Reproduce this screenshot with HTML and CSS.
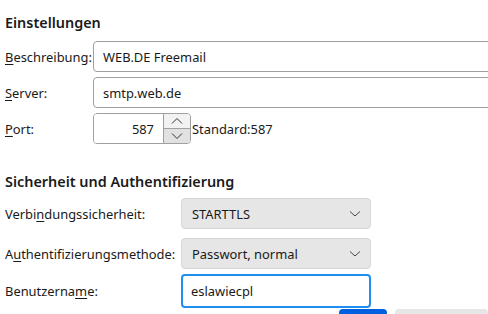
FILE: index.html
```html
<!DOCTYPE html>
<html lang="de">
<head>
    <meta charset="UTF-8">
    <title>Postausgangs-Server</title>
    <link rel="stylesheet" href="styles.css">
</head>
<body>
    <h2 class="section-title">Einstellungen</h2>
    <div class="server-grid">
        <label for="description"><u>B</u>eschreibung:</label>
        <input type="text" id="description" class="text-field" value="WEB.DE Freemail">

        <label for="hostname"><u>S</u>erver:</label>
        <input type="text" id="hostname" class="text-field" value="smtp.web.de">

        <label for="port"><u>P</u>ort:</label>
        <div class="port-row">
            <div class="port-box">
                <input type="text" id="port" class="port-input" value="587">
                <div class="spinner">
                    <span class="spin-up">
                        <svg width="12" height="8" viewBox="0 0 12 8"><path d="M1 6.5 L6 1.5 L11 6.5" fill="none" stroke="#333" stroke-width="1"/></svg>
                    </span>
                    <span class="spin-down">
                        <svg width="12" height="8" viewBox="0 0 12 8"><path d="M1 1.5 L6 6.5 L11 1.5" fill="none" stroke="#333" stroke-width="1"/></svg>
                    </span>
                </div>
            </div>
            <span class="port-default">Standard:587</span>
        </div>
    </div>

    <h2 class="section-title second">Sicherheit und Authentifizierung</h2>
    <div class="auth-grid">
        <label for="security">Verbi<u>n</u>dungssicherheit:</label>
        <div class="dropdown" id="security">
            <span>STARTTLS</span>
            <svg width="12" height="8" viewBox="0 0 12 8"><path d="M1 1.5 L6 6 L11 1.5" fill="none" stroke="#444" stroke-width="1"/></svg>
        </div>

        <label for="auth-method">A<u>u</u>thentifizierungsmethode:</label>
        <div class="dropdown" id="auth-method">
            <span>Passwort, normal</span>
            <svg width="12" height="8" viewBox="0 0 12 8"><path d="M1 1.5 L6 6 L11 1.5" fill="none" stroke="#444" stroke-width="1"/></svg>
        </div>

        <label for="username" class="tight">Benutzerna<u>m</u>e:</label>
        <input type="text" id="username" class="text-field focused tight" value="eslawiecpl">
    </div>

    <div class="dialog-buttons">
        <span class="btn-primary"></span>
        <span class="btn-secondary"></span>
    </div>
</body>
</html>
```

FILE: styles.css
```css
/* Page */
body {
    margin: 0;
    padding: 0 0 0 5px;
    font-family: "Noto Sans", "Open Sans", sans-serif;
    font-size: 12.9px;
    color: #1a1a1a;
    background-color: white;
    overflow: hidden;
    height: 314px;
}

u {
    text-decoration-thickness: 1px;
    text-underline-offset: 2px;
}

.section-title {
    font-size: 14.4px;
    font-weight: 600;
    margin: 12px 0 8px 0;
    height: 21px;
    line-height: 21px;
}

.section-title.second {
    margin-top: 27px;
    margin-bottom: 6px;
}

/* First block */
.server-grid {
    display: grid;
    grid-template-columns: 88px 1fr;
    grid-auto-rows: 31px;
    row-gap: 5px;
    align-items: center;
}

.text-field {
    box-sizing: border-box;
    height: 31px;
    width: 100%;
    padding: 0 9px;
    font-family: inherit;
    font-size: 12.9px;
    color: #1a1a1a;
    border: 1px solid #a0a0a0;
    border-radius: 4px;
    background-color: white;
}

.server-grid .text-field {
    width: calc(100% + 20px);
}

.port-row {
    display: flex;
    align-items: center;
}

.port-box {
    display: flex;
    height: 31px;
    width: 98px;
    box-sizing: border-box;
    border: 1px solid #a0a0a0;
    border-radius: 4px;
    overflow: hidden;
}

.port-input {
    flex: 1;
    min-width: 0;
    width: auto;
    border: none;
    padding: 0 9px 0 0;
    text-align: right;
    font-family: inherit;
    font-size: 12.9px;
    color: #1a1a1a;
}

.spinner {
    flex: none;
    display: flex;
    flex-direction: column;
    width: 26px;
    border-left: 1px solid #a0a0a0;
}

.spinner span {
    flex: 1;
    display: flex;
    align-items: center;
    justify-content: center;
}

.spin-up {
    background-color: #f2f2f2;
    border-bottom: 1px solid #a0a0a0;
}

.spin-down {
    background-color: #e1e1e1;
}

.port-default {
    margin-left: 1px;
}

/* Second block */
.auth-grid {
    display: grid;
    grid-template-columns: 176px 190px;
    grid-template-rows: 31px 31px 34px;
    row-gap: 9px;
    align-items: center;
}

.auth-grid .tight {
    margin-top: -8px;
}

.auth-grid .focused {
    height: 34px;
    border: 2px solid #1f8ef1;
    padding-left: 8px;
}

.dropdown {
    box-sizing: border-box;
    height: 31px;
    display: flex;
    align-items: center;
    justify-content: space-between;
    padding: 0 9px 0 10px;
    background-color: #e6e6e6;
    border: 1px solid #d6d6d6;
    border-radius: 4px;
}

/* Dialog buttons (cut off at bottom) */
.dialog-buttons {
    display: flex;
    gap: 8px;
    margin: -3px 0 0 334px;
}

.btn-primary {
    width: 52px;
    height: 20px;
    background-color: #0060df;
    border-radius: 4px;
}

.btn-secondary {
    width: 100px;
    height: 20px;
    background-color: #e6e6e6;
    border-radius: 4px;
}
```
